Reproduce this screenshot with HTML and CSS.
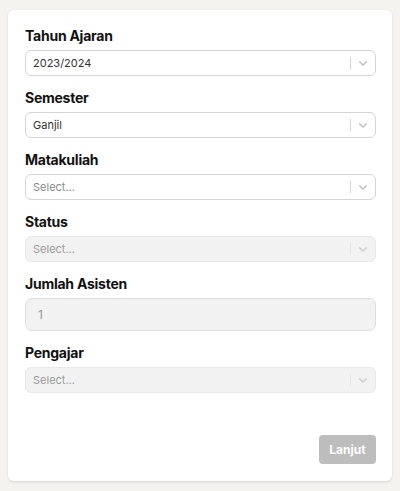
FILE: index.html
```html
<!DOCTYPE html>
<html lang="id">
<head>
<meta charset="utf-8">
<link rel="stylesheet" href="styles.css">
</head>
<body>
<div class="card">
  <form class="form">
    <div class="group">
      <label class="label">Tahun Ajaran</label>
      <div class="select">
        <span class="value">2023/2024</span>
        <span class="sep"></span>
        <span class="ind"><svg viewBox="0 0 20 20" width="14" height="14"><path d="M4.516 7.548c0.436-0.446 1.043-0.481 1.576 0l3.908 3.747 3.908-3.747c0.533-0.481 1.141-0.446 1.574 0 0.436 0.445 0.408 1.197 0 1.615-0.406 0.418-4.695 4.502-4.695 4.502-0.217 0.223-0.502 0.335-0.787 0.335s-0.57-0.112-0.789-0.335c0 0-4.287-4.084-4.695-4.502s-0.436-1.17 0-1.615z"/></svg></span>
      </div>
    </div>
    <div class="group">
      <label class="label">Semester</label>
      <div class="select">
        <span class="value">Ganjil</span>
        <span class="sep"></span>
        <span class="ind"><svg viewBox="0 0 20 20" width="14" height="14"><path d="M4.516 7.548c0.436-0.446 1.043-0.481 1.576 0l3.908 3.747 3.908-3.747c0.533-0.481 1.141-0.446 1.574 0 0.436 0.445 0.408 1.197 0 1.615-0.406 0.418-4.695 4.502-4.695 4.502-0.217 0.223-0.502 0.335-0.787 0.335s-0.57-0.112-0.789-0.335c0 0-4.287-4.084-4.695-4.502s-0.436-1.17 0-1.615z"/></svg></span>
      </div>
    </div>
    <div class="group">
      <label class="label">Matakuliah</label>
      <div class="select">
        <span class="value placeholder">Select...</span>
        <span class="sep"></span>
        <span class="ind"><svg viewBox="0 0 20 20" width="14" height="14"><path d="M4.516 7.548c0.436-0.446 1.043-0.481 1.576 0l3.908 3.747 3.908-3.747c0.533-0.481 1.141-0.446 1.574 0 0.436 0.445 0.408 1.197 0 1.615-0.406 0.418-4.695 4.502-4.695 4.502-0.217 0.223-0.502 0.335-0.787 0.335s-0.57-0.112-0.789-0.335c0 0-4.287-4.084-4.695-4.502s-0.436-1.17 0-1.615z"/></svg></span>
      </div>
    </div>
    <div class="group">
      <label class="label">Status</label>
      <div class="select disabled">
        <span class="value placeholder">Select...</span>
        <span class="sep"></span>
        <span class="ind"><svg viewBox="0 0 20 20" width="14" height="14"><path d="M4.516 7.548c0.436-0.446 1.043-0.481 1.576 0l3.908 3.747 3.908-3.747c0.533-0.481 1.141-0.446 1.574 0 0.436 0.445 0.408 1.197 0 1.615-0.406 0.418-4.695 4.502-4.695 4.502-0.217 0.223-0.502 0.335-0.787 0.335s-0.57-0.112-0.789-0.335c0 0-4.287-4.084-4.695-4.502s-0.436-1.17 0-1.615z"/></svg></span>
      </div>
    </div>
    <div class="group">
      <label class="label">Jumlah Asisten</label>
      <div class="input disabled">1</div>
    </div>
    <div class="group">
      <label class="label">Pengajar</label>
      <div class="select disabled">
        <span class="value placeholder">Select...</span>
        <span class="sep"></span>
        <span class="ind"><svg viewBox="0 0 20 20" width="14" height="14"><path d="M4.516 7.548c0.436-0.446 1.043-0.481 1.576 0l3.908 3.747 3.908-3.747c0.533-0.481 1.141-0.446 1.574 0 0.436 0.445 0.408 1.197 0 1.615-0.406 0.418-4.695 4.502-4.695 4.502-0.217 0.223-0.502 0.335-0.787 0.335s-0.57-0.112-0.789-0.335c0 0-4.287-4.084-4.695-4.502s-0.436-1.17 0-1.615z"/></svg></span>
      </div>
    </div>
    <div class="actions">
      <button type="button" class="btn" disabled>Lanjut</button>
    </div>
  </form>
</div>
</body>
</html>
```

FILE: styles.css
```css
* { box-sizing: border-box; }
html, body { margin: 0; }
body {
  background: #f4f3f0;
  padding: 10px 8px;
  font-family: Inter, "Noto Sans", sans-serif;
  color: #111;
}
.card {
  background: #fff;
  border-radius: 6px;
  box-shadow: 0 1px 3px rgba(0,0,0,0.12);
  height: 471px;
  padding: 16px 16px 17px 17px;
}
.form {
  display: flex;
  flex-direction: column;
  gap: 12px;
  height: 100%;
}
.group {
  display: flex;
  flex-direction: column;
  gap: 4px;
}
.label {
  font-size: 14px;
  font-weight: 700;
  line-height: 20px;
  letter-spacing: -0.25px;
  color: #111;
}
.select {
  display: flex;
  align-items: center;
  height: 26px;
  border: 1px solid #d4d4d4;
  border-radius: 6px;
  background: #fff;
  font-size: 11px;
}
.value {
  flex: 1;
  padding-left: 7px;
  color: #333;
}
.value.placeholder { color: #888; }
.sep {
  width: 1px;
  align-self: stretch;
  margin: 6px 0;
  background: #d4d4d4;
}
.ind {
  width: 24px;
  display: flex;
  justify-content: center;
  align-items: center;
}
.ind svg { fill: #c4c4c4; display: block; }
.select.disabled {
  background: #f2f2f2;
  border-color: #e8e8e8;
}
.select.disabled .value.placeholder { color: #9a9a9a; }
.select.disabled .sep { background: #e4e4e4; }
.select.disabled .ind svg { fill: #cfcfcf; }
.input {
  height: 33px;
  display: flex;
  align-items: center;
  padding-left: 12px;
  border: 1px solid #dedede;
  border-radius: 7px;
  background: #f2f2f2;
  font-size: 12px;
  color: #999;
}
.actions {
  margin-top: auto;
  display: flex;
  justify-content: flex-end;
}
.btn {
  width: 57px;
  height: 29px;
  border: none;
  border-radius: 4px;
  background: #bdbdbd;
  color: #fff;
  font-family: Inter, "Noto Sans", sans-serif;
  font-size: 12px;
  font-weight: 700;
  padding: 0;
}
```
